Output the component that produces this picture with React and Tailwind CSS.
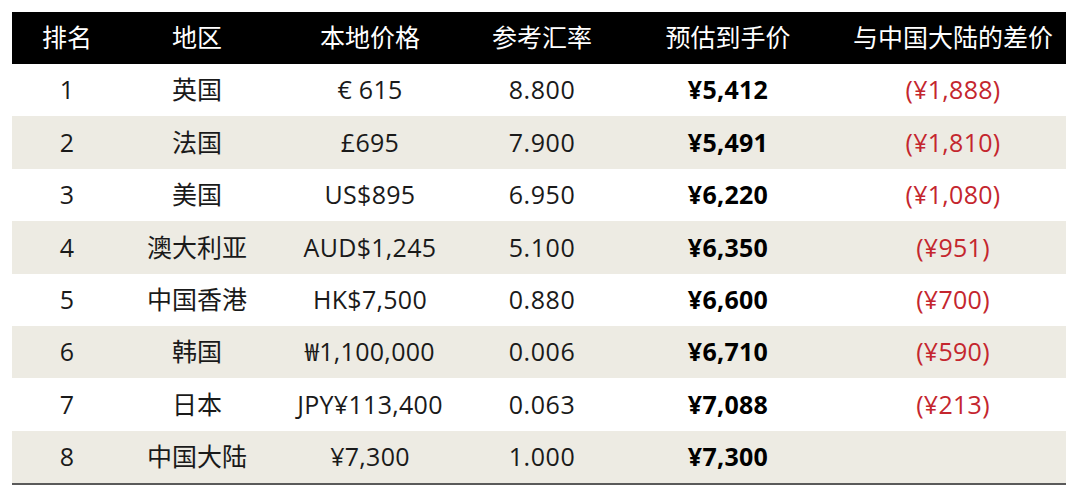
const headers = ['排名', '地区', '本地价格', '参考汇率', '预估到手价', '与中国大陆的差价'];

const rows = [
  ['1', '英国', '€ 615', '8.800', '¥5,412', '(¥1,888)'],
  ['2', '法国', '£695', '7.900', '¥5,491', '(¥1,810)'],
  ['3', '美国', 'US$895', '6.950', '¥6,220', '(¥1,080)'],
  ['4', '澳大利亚', 'AUD$1,245', '5.100', '¥6,350', '(¥951)'],
  ['5', '中国香港', 'HK$7,500', '0.880', '¥6,600', '(¥700)'],
  ['6', '韩国', '₩1,100,000', '0.006', '¥6,710', '(¥590)'],
  ['7', '日本', 'JPY¥113,400', '0.063', '¥7,088', '(¥213)'],
  ['8', '中国大陆', '¥7,300', '1.000', '¥7,300', ''],
];

const cols = 'grid grid-cols-[110px_150px_196px_148px_224px_226px]';

export default function App() {
  return (
    <div
      className="w-[1078px] h-[496px] bg-white pt-[12px] pl-[12px]"
      style={{ fontFamily: '"Open Sans", "Noto Sans CJK SC", sans-serif' }}
    >
      <div className="w-[1054px] border-b-2 border-[#5a5a5a]">
        {/* header */}
        <div className={`${cols} h-[52px] bg-black text-white text-[25px] items-center`}>
          {headers.map((h) => (
            <div key={h} className="text-center whitespace-nowrap">{h}</div>
          ))}
        </div>

        {rows.map((r, i) => (
          <div
            key={r[0]}
            className={`${cols} h-[52.4px] items-center text-[25px] text-[#1a1a1a] ${i % 2 === 1 ? 'bg-[#edebe3]' : 'bg-white'}`}
          >
            <div className="text-center">{r[0]}</div>
            <div className="text-center">{r[1]}</div>
            <div className="text-center tracking-[0.3px] whitespace-nowrap">{r[2]}</div>
            <div className="text-center tracking-[0.6px]">{r[3]}</div>
            <div className="text-center font-bold text-black tracking-[0.3px]">{r[4]}</div>
            <div className="text-center text-[#c4262e] tracking-[0.3px]">{r[5]}</div>
          </div>
        ))}
      </div>
    </div>
  );
}
